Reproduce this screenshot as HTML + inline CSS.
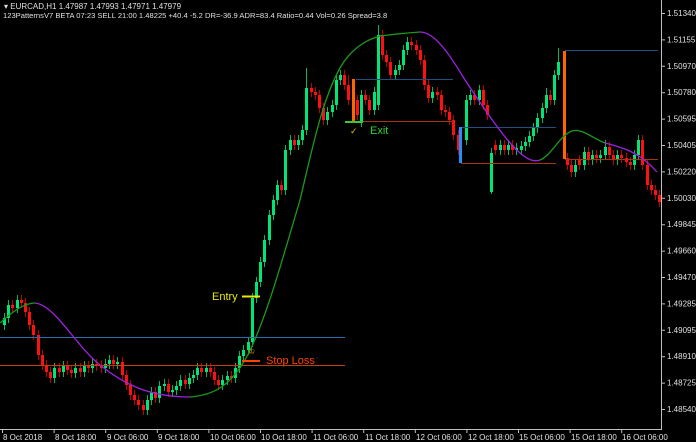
<!DOCTYPE html>
<html><head><meta charset="utf-8"><style>
html,body{margin:0;padding:0;background:#000;width:696px;height:442px;overflow:hidden}
svg{display:block}
text{font-family:"Liberation Sans",sans-serif}
</style></head><body>
<svg width="696" height="442" viewBox="0 0 696 442" xmlns="http://www.w3.org/2000/svg">
<rect width="696" height="442" fill="#000"/>
<!-- green wicks -->
<path fill="none" stroke="#00b860" stroke-width="1" d="M4.5 313v17M8.5 300v23M17.5 295v18M54.5 363v20M63.5 361v16M75.5 363v15M84.5 361v16M92.5 359v14M105.5 359v14M109.5 355v14M117.5 357v12M147.5 395v20M151.5 387v18M159.5 381v22M164.5 379v12M172.5 385v12M176.5 381v14M180.5 375v16M189.5 373v16M193.5 370v13M197.5 363v17M206.5 363v14M222.5 375v15M227.5 371v14M235.5 363v20M239.5 351v22M243.5 345v16M248.5 337v18M252.5 293v54M256.5 277v26M260.5 257v30M264.5 235v32M269.5 210v35M273.5 195v25M277.5 180v25M285.5 145v50M290.5 135v20M298.5 135v15M302.5 125v20M306.5 68v67M327.5 107v18M332.5 100v17M336.5 75v35M340.5 70v15M361.5 90v37M374.5 87v28M378.5 25v85M395.5 65v15M399.5 60v15M403.5 45v25M407.5 37v18M432.5 87v16M466.5 95v50M470.5 90v15M479.5 85v20M491.5 148v46M500.5 140v15M508.5 140v15M516.5 143v12M521.5 141v14M525.5 137v14M529.5 131v16M533.5 123v18M537.5 113v20M542.5 103v20M546.5 88v25M554.5 70v35M558.5 48v32M575.5 160v17M584.5 147v23M592.5 150v15M600.5 150v13M605.5 140v20M617.5 150v15M634.5 150v20M638.5 135v25"/>
<!-- red wicks -->
<path fill="none" stroke="#c00000" stroke-width="1" d="M12.5 300v13M21.5 295v13M25.5 298v19M29.5 307v23M33.5 320v20M38.5 330v30M42.5 350v20M46.5 360v17M50.5 367v16M59.5 363v14M67.5 361v14M71.5 365v13M80.5 363v14M88.5 361v12M96.5 359v12M101.5 360v13M113.5 355v14M122.5 357v23M126.5 370v20M130.5 380v20M134.5 390v15M138.5 395v15M143.5 400v15M155.5 387v16M168.5 379v18M185.5 375v14M201.5 363v14M210.5 363v14M214.5 367v18M218.5 375v15M231.5 371v12M281.5 180v15M294.5 135v15M311.5 83v14M315.5 87v13M319.5 90v23M323.5 103v22M344.5 70v20M348.5 75v30M357.5 95v25M365.5 90v15M369.5 95v20M382.5 30v30M386.5 50v17M390.5 57v23M411.5 37v13M416.5 40v15M420.5 45v20M424.5 55v35M428.5 80v23M437.5 87v13M441.5 90v25M445.5 105v12M449.5 107v18M453.5 115v25M458.5 130v25M474.5 90v15M483.5 85v25M487.5 100v20M495.5 140v15M504.5 140v15M512.5 140v15M550.5 90v15M567.5 153v17M571.5 160v17M579.5 155v15M588.5 147v18M596.5 150v13M609.5 142v18M613.5 150v15M621.5 150v13M626.5 153v14M630.5 157v13M642.5 135v35M647.5 160v30M651.5 180v15M655.5 185v15M659.5 190v17"/>
<!-- green bodies -->
<path fill="#00e676" d="M3 318h3v7h-3zM7 305h3v13h-3zM16 300h3v8h-3zM53 368h3v10h-3zM62 366h3v6h-3zM74 368h3v5h-3zM83 366h3v6h-3zM91 364h3v4h-3zM104 364h3v4h-3zM108 360h3v4h-3zM116 362h3v2h-3zM146 400h3v10h-3zM150 392h3v8h-3zM158 386h3v12h-3zM163 384h3v2h-3zM171 390h3v2h-3zM175 386h3v4h-3zM179 380h3v6h-3zM188 378h3v6h-3zM192 375h3v3h-3zM196 368h3v7h-3zM205 368h3v4h-3zM221 380h3v5h-3zM226 376h3v4h-3zM234 368h3v10h-3zM238 356h3v12h-3zM242 350h3v6h-3zM247 342h3v8h-3zM251 298h3v44h-3zM255 282h3v16h-3zM259 262h3v20h-3zM263 240h3v22h-3zM268 215h3v25h-3zM272 200h3v15h-3zM276 185h3v15h-3zM284 150h3v40h-3zM289 140h3v10h-3zM297 140h3v5h-3zM301 130h3v10h-3zM305 88h3v42h-3zM326 112h3v8h-3zM331 105h3v7h-3zM335 80h3v25h-3zM339 75h3v5h-3zM360 95h3v27h-3zM373 92h3v18h-3zM377 35h3v70h-3zM394 70h3v5h-3zM398 65h3v5h-3zM402 50h3v15h-3zM406 42h3v8h-3zM431 92h3v6h-3zM465 100h3v40h-3zM469 95h3v5h-3zM478 90h3v10h-3zM490 153h3v39h-3zM499 145h3v5h-3zM507 145h3v5h-3zM515 148h3v2h-3zM520 146h3v4h-3zM524 142h3v4h-3zM528 136h3v6h-3zM532 128h3v8h-3zM536 118h3v10h-3zM541 108h3v10h-3zM545 95h3v13h-3zM553 75h3v25h-3zM557 62h3v13h-3zM574 165h3v7h-3zM583 152h3v13h-3zM591 155h3v5h-3zM599 155h3v3h-3zM604 147h3v8h-3zM616 155h3v5h-3zM633 155h3v10h-3zM637 140h3v15h-3z"/>
<!-- red bodies -->
<path fill="#ff1010" d="M11 305h3v3h-3zM20 300h3v3h-3zM24 303h3v9h-3zM28 312h3v13h-3zM32 325h3v10h-3zM37 335h3v20h-3zM41 355h3v10h-3zM45 365h3v7h-3zM49 372h3v6h-3zM58 368h3v4h-3zM66 366h3v4h-3zM70 370h3v3h-3zM79 368h3v4h-3zM87 366h3v2h-3zM95 364h3v2h-3zM100 365h3v3h-3zM112 360h3v4h-3zM121 362h3v13h-3zM125 375h3v10h-3zM129 385h3v10h-3zM133 395h3v5h-3zM137 400h3v5h-3zM142 405h3v5h-3zM154 392h3v6h-3zM167 384h3v8h-3zM184 380h3v4h-3zM200 368h3v4h-3zM209 368h3v4h-3zM213 372h3v8h-3zM217 380h3v5h-3zM230 376h3v2h-3zM280 185h3v5h-3zM293 140h3v5h-3zM310 88h3v4h-3zM314 92h3v3h-3zM318 95h3v13h-3zM322 108h3v12h-3zM343 75h3v10h-3zM347 85h3v15h-3zM356 100h3v15h-3zM364 95h3v5h-3zM368 100h3v10h-3zM381 35h3v20h-3zM385 55h3v7h-3zM389 62h3v13h-3zM410 42h3v3h-3zM415 45h3v5h-3zM419 50h3v10h-3zM423 60h3v25h-3zM427 85h3v13h-3zM436 92h3v3h-3zM440 95h3v15h-3zM444 110h3v2h-3zM448 112h3v8h-3zM452 120h3v15h-3zM457 135h3v15h-3zM473 95h3v5h-3zM482 90h3v15h-3zM486 105h3v10h-3zM494 145h3v5h-3zM503 145h3v5h-3zM511 145h3v5h-3zM549 95h3v5h-3zM566 158h3v7h-3zM570 165h3v7h-3zM578 160h3v5h-3zM587 152h3v8h-3zM595 155h3v3h-3zM608 147h3v8h-3zM612 155h3v5h-3zM620 155h3v3h-3zM625 158h3v4h-3zM629 162h3v3h-3zM641 140h3v25h-3zM646 165h3v20h-3zM650 185h3v5h-3zM654 190h3v5h-3zM658 195h3v7h-3z"/>
<!-- levels -->
<line x1="0" y1="337.5" x2="345" y2="337.5" stroke="#2a6fb0" stroke-width="1"/>
<line x1="0" y1="365.5" x2="345" y2="365.5" stroke="#c0400a" stroke-width="1"/>
<line x1="356" y1="79.5" x2="453" y2="79.5" stroke="#1f4f7a" stroke-width="1"/>
<line x1="356" y1="121.5" x2="453" y2="121.5" stroke="#a83410" stroke-width="1"/>
<line x1="461" y1="127.5" x2="556" y2="127.5" stroke="#1f4f7a" stroke-width="1"/>
<line x1="461" y1="163.5" x2="556" y2="163.5" stroke="#a83410" stroke-width="1"/>
<line x1="565" y1="50.5" x2="658" y2="50.5" stroke="#1f4f7a" stroke-width="1"/>
<line x1="565" y1="159.5" x2="658" y2="159.5" stroke="#a83410" stroke-width="1"/>
<rect x="352" y="79" width="3" height="42" fill="#ff6600"/>
<rect x="459" y="127" width="3" height="36" fill="#2090ff"/>
<rect x="563" y="51" width="3" height="108" fill="#ff6600"/>
<!-- MA -->
<path d="M0,323 C12,312 24,303 35,303" fill="none" stroke="#1a9a1a" stroke-width="1.3"/>
<path d="M35,303 C55,305 75,345 100,365 C125,385 150,397 190,397" fill="none" stroke="#a020e0" stroke-width="1.3"/>
<path d="M190,397 C215,395 230,385 245,360 C265,325 285,250 300,200 C312,150 322,100 340,68 C350,50 365,40 380,36 C395,34 405,33 420,32" fill="none" stroke="#1a9a1a" stroke-width="1.3"/>
<path d="M420,32 C435,32 450,55 465,80 C485,110 505,140 520,153 C528,160 535,162 540,160" fill="none" stroke="#a020e0" stroke-width="1.3"/>
<path d="M540,160 C552,155 560,135 572,131 C582,128 592,138 605,143" fill="none" stroke="#1a9a1a" stroke-width="1.3"/>
<path d="M605,143 C625,148 640,153 657,172" fill="none" stroke="#a020e0" stroke-width="1.3"/>
<!-- trade marks -->
<line x1="242" y1="296.5" x2="260" y2="296.5" stroke="#e8e800" stroke-width="2"/>
<text x="212" y="300" font-size="11" fill="#e8e800">Entry</text>
<line x1="242" y1="361" x2="260" y2="361" stroke="#ff4500" stroke-width="2"/>
<text x="266" y="364" font-size="11" fill="#ff4500">Stop Loss</text>
<text x="248" y="354" font-size="8" fill="#d4a000">♔</text>
<line x1="345" y1="122" x2="363" y2="122" stroke="#32cd32" stroke-width="2"/>
<text x="370" y="134" font-size="11" fill="#32cd32">Exit</text>
<text x="350" y="134" font-size="9" fill="#d4c000">✓</text>
<!-- frame -->
<line x1="661.5" y1="0" x2="661.5" y2="429" stroke="#c0c0c0"/>
<line x1="0" y1="429.5" x2="662" y2="429.5" stroke="#c0c0c0"/>
<g font-size="8" fill="#e0e0e0">
<path stroke="#c0c0c0" d="M661 13.5h4M661 39.9h4M661 66.3h4M661 92.7h4M661 119.1h4M661 145.5h4M661 171.9h4M661 198.3h4M661 224.7h4M661 251.1h4M661 277.5h4M661 303.9h4M661 330.3h4M661 356.7h4M661 383.1h4M661 409.5h4M2.5 429v4M54.1 429v4M105.7 429v4M157.3 429v4M208.9 429v4M260.5 429v4M312.1 429v4M363.7 429v4M415.3 429v4M466.9 429v4M518.5 429v4M570.1 429v4M621.7 429v4"/>
<text x="667" y="16">1.51340</text><text x="667" y="42.4">1.51155</text><text x="667" y="68.8">1.50970</text><text x="667" y="95.2">1.50780</text><text x="667" y="121.6">1.50595</text><text x="667" y="148">1.50405</text><text x="667" y="174.4">1.50220</text><text x="667" y="200.8">1.50030</text><text x="667" y="227.2">1.49845</text><text x="667" y="253.6">1.49660</text><text x="667" y="280">1.49470</text><text x="667" y="306.4">1.49285</text><text x="667" y="332.8">1.49095</text><text x="667" y="359.2">1.48910</text><text x="667" y="385.6">1.48725</text><text x="667" y="412">1.48540</text>
<text x="3" y="440">8 Oct 2018</text><text x="55" y="440">8 Oct 18:00</text><text x="107" y="440">9 Oct 06:00</text><text x="158" y="440">9 Oct 18:00</text><text x="210" y="440">10 Oct 06:00</text><text x="261" y="440">10 Oct 18:00</text><text x="313" y="440">11 Oct 06:00</text><text x="365" y="440">11 Oct 18:00</text><text x="416" y="440">12 Oct 06:00</text><text x="468" y="440">12 Oct 18:00</text><text x="519" y="440">15 Oct 06:00</text><text x="571" y="440">15 Oct 18:00</text><text x="622" y="440">16 Oct 06:00</text>
</g>
<text x="4" y="9" font-size="8" fill="#e0e0e0">▾ EURCAD,H1  1.47987 1.47993 1.47971 1.47979</text>
<text x="3" y="18" font-size="7.6" fill="#e0e0e0">123PatternsV7 BETA  07:23  SELL 21:00 1.48225 +40.4 -5.2  DR=-36.9  ADR=83.4  Ratio=0.44  Vol=0.26  Spread=3.8</text>
</svg>
</body></html>
